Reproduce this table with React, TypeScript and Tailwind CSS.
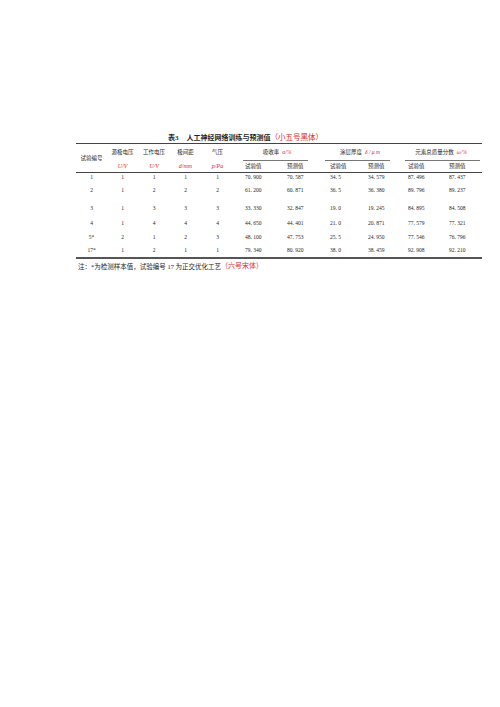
const serif = "font-['Liberation_Serif','Noto_Sans_CJK_SC',serif]";

const rows = [
  ["1", "1", "1", "1", "1", "70. 900", "70. 587", "34. 5", "34. 579", "87. 496", "87. 437"],
  ["2", "1", "2", "2", "2", "61. 200", "60. 871", "36. 5", "36. 380", "89. 796", "89. 237"],
  ["3", "1", "3", "3", "3", "33. 330", "32. 847", "19. 0", "19. 245", "84. 895", "84. 508"],
  ["4", "1", "4", "4", "4", "44. 650", "44. 401", "21. 0", "20. 871", "77. 579", "77. 321"],
  ["5*", "2", "1", "2", "3", "48. 100", "47. 753", "25. 5", "24. 950", "77. 546", "76. 796"],
  ["17*", "1", "2", "1", "1", "79. 340", "80. 920", "38. 0", "38. 459", "92. 908", "92. 210"],
];

// the source table has uneven row spacing
const rowHeights = ["h-[8px]", "h-[19px]", "h-[16px]", "h-[14px]", "h-[14px]", "h-[13px]"];
const valuePad = ["pl-[11px]", "pl-[10px]", "pl-[10px]", "pl-[8px]", "pl-[8px]", "pl-[9px]"];
const cols = "grid grid-cols-[31px_31px_32px_31px_33px_43px_43px_40px_40px_40px_42px]";

const params = [
  { name: "源极电压", unit: "U/V" },
  { name: "工作电压", unit: "U/V" },
  { name: "极间距", unit: "d/mm" },
  { name: "气压", unit: "p/Pa" },
];

const groups = [
  { name: "吸收率", unit: "α/%", line: "ml-[9px] mr-[12px]" },
  { name: "涂层厚度", unit: "δ / μ m", line: "ml-[5px] mr-[10px]" },
  { name: "元素总质量分数", unit: "ω/%", line: "ml-[5px] mr-[2px]" },
];

function Unit({ children }: { children: React.ReactNode }) {
  return <span className="italic text-[#e0282e]">{children}</span>;
}

export default function App() {
  return (
    <div className={`h-[707px] w-[500px] bg-white text-[#1f1f1f] ${serif}`}>
      <div className="ml-[76px] w-[406px] pt-[132px]">
        <div className="h-[11px] pl-[92px] text-[7px] leading-[11px] font-bold whitespace-nowrap">
          表3<span className="ml-[8px]">人工神经网络训练与预测值</span>
          <span className="text-[7.5px] font-normal text-[#e0282e]">（小五号黑体）</span>
        </div>
        <div className="h-px bg-[#444]" />

        <div className={`${cols} grid-rows-[17px_11px] text-[5.5px]`}>
          <div className="row-span-2 flex items-center justify-center">试验编号</div>
          {params.map((p) => (
            <div key={p.name} className="flex items-center justify-center">
              {p.name}
            </div>
          ))}
          {groups.map((g) => (
            <div key={g.name} className="col-span-2 flex flex-col">
              <div className="flex h-[16px] items-center justify-center whitespace-nowrap">
                {g.name}
                <span className="ml-[3px]">
                  <Unit>{g.unit}</Unit>
                </span>
              </div>
              <div className={`h-px bg-[#777] ${g.line}`} />
            </div>
          ))}
          {params.map((p, i) => (
            <div key={i} className="flex items-center justify-center text-[6px]">
              <Unit>{p.unit}</Unit>
            </div>
          ))}
          {valuePad.map((pad, i) => (
            <div key={i} className={`flex items-center ${pad}`}>
              {i % 2 === 0 ? "试验值" : "预测值"}
            </div>
          ))}
        </div>
        <div className="h-px bg-[#444]" />

        {rows.map((r, ri) => (
          <div key={ri} className={`${cols} ${rowHeights[ri]} text-[5.5px]`}>
            {r.map((v, ci) =>
              ci < 5 ? (
                <div key={ci} className="flex items-center justify-center">
                  {v}
                </div>
              ) : (
                <div key={ci} className={`flex items-center whitespace-nowrap ${valuePad[ci - 5]}`}>
                  {v}
                </div>
              )
            )}
          </div>
        ))}
        <div className="h-[2px] bg-[#555]" />

        <div className="flex h-[15px] items-center pl-[2px] text-[6.5px] whitespace-nowrap">
          注：*为检测样本值，试验编号 17 为正交优化工艺
          <span className="text-[7px] text-[#e0282e]">（六号宋体）</span>
        </div>
      </div>
    </div>
  );
}
